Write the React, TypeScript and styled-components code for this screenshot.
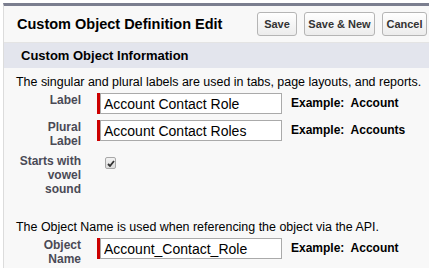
import styled, { createGlobalStyle } from 'styled-components';

const GlobalStyle = createGlobalStyle`
  body {
    margin: 0;
    background: #fff;
    font-family: "Liberation Sans", Arial, sans-serif;
  }
`;

const Page = styled.div`
  margin: 3px 0 0 3px;
  border-top: 3px solid #7b7e8f;
  border-left: 1px solid #dcdcdc;
  background: #f8f8f8;
  min-height: 262px;
  overflow: hidden;
`;

const Header = styled.div`
  display: flex;
  align-items: center;
  justify-content: space-between;
  height: 36px;
  padding: 0 2px 0 13px;
  background: #f8f8f8;
  border-bottom: 1px solid #e4e4e4;
`;

const Title = styled.h2`
  margin: 0;
  font-size: 14.5px;
  font-weight: bold;
  color: #000;
`;

const ButtonBar = styled.div`
  display: flex;
  gap: 7px;
`;

const Button = styled.button<{ $width: number }>`
  width: ${({ $width }) => $width}px;
  height: 24px;
  padding: 0;
  font-family: "Liberation Sans", Arial, sans-serif;
  font-size: 11px;
  font-weight: bold;
  color: #333;
  background: linear-gradient(#ffffff, #ececec);
  border: 1px solid #b5b5b5;
  border-radius: 3px;
`;

const SectionHeader = styled.div`
  display: flex;
  align-items: center;
  height: 25px;
  padding-left: 17px;
  background: #e3e5ed;
  font-size: 13px;
  font-weight: bold;
  color: #000;
`;

const Body = styled.div`
  padding: 6px 0 0 12px;
`;

const Note = styled.p<{ $gap?: number }>`
  margin: ${({ $gap }) => $gap ?? 0}px 0 0;
  font-size: 12.45px;
  line-height: 16px;
  color: #000;
  white-space: nowrap;
`;

const Row = styled.div`
  display: flex;
  align-items: flex-start;
  padding: 3px 0;
`;

const FieldLabel = styled.div`
  width: 65px;
  text-align: right;
  font-size: 12px;
  font-weight: bold;
  line-height: 14px;
  color: #4a4a56;
`;

const Required = styled.div`
  display: flex;
  margin-left: 16px;
  &::before {
    content: '';
    width: 3px;
    background: #c00;
  }
`;

const Input = styled.input`
  box-sizing: border-box;
  width: 182px;
  height: 21px;
  padding: 0 3px;
  border: 1px solid #aaa;
  font-family: "Liberation Sans", Arial, sans-serif;
  font-size: 14px;
  color: #000;
  background: #fff;
  outline: none;
`;

const Example = styled.div`
  margin-left: 9px;
  font-size: 12px;
  font-weight: bold;
  line-height: 21px;
  color: #000;
  white-space: pre;
`;

const CheckBox = styled.span`
  box-sizing: border-box;
  display: flex;
  align-items: center;
  justify-content: center;
  width: 11px;
  height: 12px;
  margin: 3px 0 0 24px;
  border: 1px solid #a8a8a8;
  border-radius: 2px;
  background: linear-gradient(#f2f2f2, #dcdcdc);
`;

function Field({ label, value, example }: { label: string; value: string; example: string }) {
  return (
    <Row>
      <FieldLabel>{label}</FieldLabel>
      <Required>
        <Input defaultValue={value} />
      </Required>
      <Example>{`Example:  ${example}`}</Example>
    </Row>
  );
}

export default function App() {
  return (
    <>
      <GlobalStyle />
      <Page>
        <Header>
          <Title>Custom Object Definition Edit</Title>
          <ButtonBar>
            <Button $width={40}>Save</Button>
            <Button $width={71}>Save &amp; New</Button>
            <Button $width={45}>Cancel</Button>
          </ButtonBar>
        </Header>
        <SectionHeader>Custom Object Information</SectionHeader>
        <Body>
          <Note>The singular and plural labels are used in tabs, page layouts, and reports.</Note>
          <Field label="Label" value="Account Contact Role" example="Account" />
          <Field label="Plural Label" value="Account Contact Roles" example="Accounts" />
          <Row>
            <FieldLabel>Starts with vowel sound</FieldLabel>
            <CheckBox>
              <svg width="8" height="7" viewBox="0 0 8 7">
                <path d="M1 4 L3 6 L7 1" fill="none" stroke="#333" strokeWidth="1.8" />
              </svg>
            </CheckBox>
          </Row>
          <Note $gap={20}>The Object Name is used when referencing the object via the API.</Note>
          <Field label="Object Name" value="Account_Contact_Role" example="Account" />
        </Body>
      </Page>
    </>
  );
}
